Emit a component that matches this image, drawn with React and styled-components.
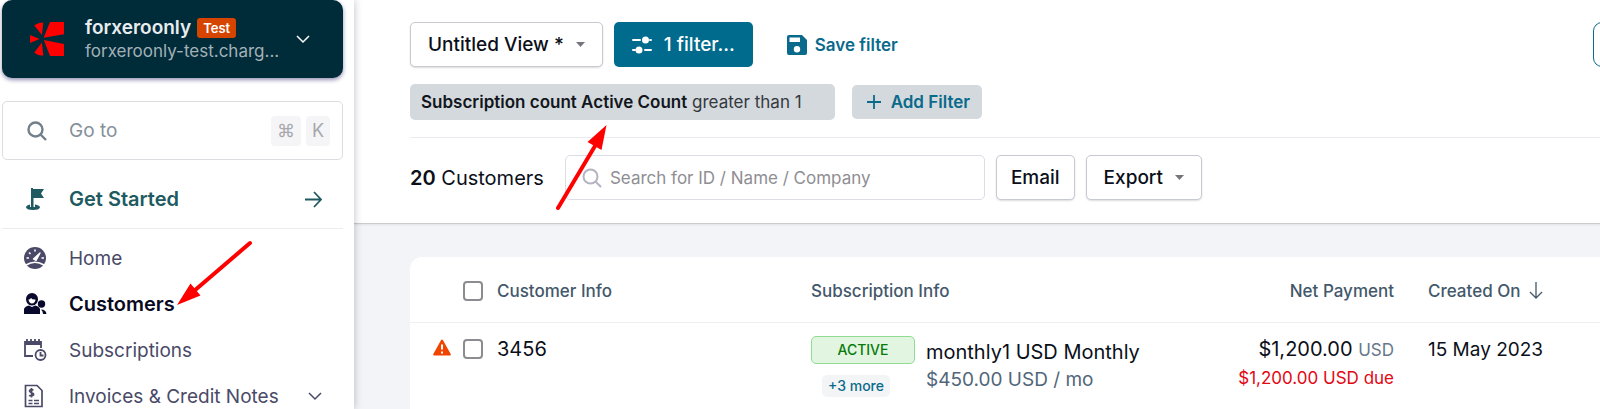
import styled, { createGlobalStyle, css } from 'styled-components';

const GlobalStyle = createGlobalStyle`
  * {
    box-sizing: border-box;
  }
  body {
    margin: 0;
    background: #fff;
    color: #0b0f19;
    font-family: Inter, 'Liberation Sans', sans-serif;
    font-size: 20px;
  }
  button, input {
    font-family: inherit;
  }
`;

const Page = styled.div`
  position: relative;
  display: flex;
  height: 100vh;
  overflow: hidden;
`;

const Sidebar = styled.aside`
  position: relative;
  flex: 0 0 354px;
  min-width: 0;
  padding: 0 11px 0 2px;
  background: #fff;
  box-shadow: 0 0 8px rgba(20, 24, 60, 0.28);
`;

const Account = styled.button`
  display: flex;
  align-items: center;
  width: 100%;
  height: 78px;
  padding: 0 33px 0 28px;
  border: none;
  border-radius: 10px;
  background: #002b39;
  box-shadow: 0 2px 4px rgba(20, 10, 90, 0.45);
  color: #fff;
  text-align: left;
`;

const AccountText = styled.span`
  flex: 1;
  margin-left: 21px;
`;

const AccountName = styled.span`
  display: flex;
  align-items: center;
  gap: 6px;
  font-size: 19px;
  font-weight: 600;
  line-height: 24px;
  color: #e9edef;
`;

const TestTag = styled.span`
  padding: 0 6px;
  border-radius: 3px;
  background: #d64500;
  font-size: 13px;
  line-height: 20px;
  color: #fff;
`;

const AccountDomain = styled.span`
  display: block;
  font-size: 17px;
  line-height: 22px;
  color: #a3b1b7;
`;

const GoTo = styled.label`
  display: flex;
  align-items: center;
  height: 59px;
  margin-top: 23px;
  padding: 0 12px 0 24px;
  border: 1px solid #dcdde0;
  border-radius: 5px;
  color: #72808c;
`;

const GoToInput = styled.input`
  flex: 1;
  min-width: 0;
  margin-left: 22px;
  padding: 0;
  border: none;
  outline: none;
  font-size: 19px;
  &::placeholder {
    color: #84909a;
  }
`;

const Key = styled.kbd`
  min-width: 24px;
  margin-left: 5px;
  padding: 0 6px;
  border-radius: 4px;
  background: #f5f5f7;
  font-family: inherit;
  font-size: 18px;
  line-height: 30px;
  text-align: center;
  color: #a8a8ac;
`;

const NavLink = styled.a`
  display: flex;
  align-items: center;
  height: ${(props) => (props.$lead ? '68px' : '46px')};
  padding: ${(props) => (props.$lead ? '10px' : '0')} 21px 0;
  font-size: ${(props) => (props.$strong ? '20px' : '19px')};
  font-weight: ${(props) => (props.$strong ? 600 : 400)};
  color: ${(props) => props.$color || '#4a4a68'};
  text-decoration: none;
  span {
    flex: 1;
    margin-left: 22px;
  }
`;

const NavList = styled.nav`
  padding-top: 6px;
  border-top: 1px solid #ebecee;
`;

const Main = styled.main`
  flex: 1;
  min-width: 0;
  overflow: hidden;
  background: #f3f4f7;
`;

const Header = styled.header`
  padding: 22px 0 23px 56px;
  border-bottom: 1px solid #c9cbcd;
  background: #fff;
  box-shadow: 0 1px 2px rgba(0, 0, 0, 0.08);
`;

const Toolbar = styled.div`
  display: flex;
  align-items: center;
  gap: 11px;
`;

const FilterRow = styled(Toolbar)`
  gap: 17px;
  padding: 17px 0;
  border-bottom: 1px solid #ebecf1;
`;

const ListBar = styled(Toolbar)`
  padding-top: 17px;
`;

const outlined = css`
  border: 1px solid #c8cad2;
  background: #fff;
  box-shadow: 0 1px 2px rgba(0, 0, 0, 0.14);
  color: #0b0f19;
`;

const Button = styled.button`
  display: flex;
  align-items: center;
  gap: 12px;
  height: 45px;
  padding: 0 ${(props) => props.$pad || 14}px;
  border: none;
  border-radius: 5px;
  font-size: 19px;
  font-weight: 500;
  white-space: nowrap;
  ${(props) => props.$primary && 'background: #006b8c; color: #fff;'}
  ${(props) => props.$outlined && outlined}
`;

const LinkButton = styled.button`
  display: flex;
  align-items: center;
  gap: 8px;
  margin-left: 23px;
  padding: 0;
  border: none;
  background: none;
  font-size: 17px;
  font-weight: 600;
  color: #0a6a8b;
`;

const MoreButton = styled(Button)`
  width: 48px;
  margin: 0 -41px 0 auto;
  border: 1px solid #0a6a8b;
  border-radius: 9px;
  background: #fff;
`;

const FilterChip = styled.button`
  height: 36px;
  padding: 0 33px 0 11px;
  border: none;
  border-radius: 5px;
  background: #d4d9dd;
  font-size: 17px;
  color: #33383d;
  white-space: nowrap;
  strong {
    font-weight: 600;
    color: #12161c;
  }
`;

const AddFilter = styled.button`
  display: flex;
  align-items: center;
  gap: 10px;
  height: 34px;
  padding: 0 12px 0 15px;
  border: none;
  border-radius: 5px;
  background: #d4d9dd;
  font-size: 17px;
  font-weight: 600;
  color: #0a6a8b;
`;

const Count = styled.h1`
  margin: 0 10px 0 0;
  font-size: 20px;
  font-weight: 400;
  white-space: nowrap;
  strong {
    font-weight: 600;
  }
`;

const Search = styled.label`
  display: flex;
  align-items: center;
  flex: 0 1 420px;
  height: 45px;
  padding: 0 16px;
  border: 1px solid #dcdde6;
  border-radius: 5px;
  color: #b4b4c2;
`;

const SearchInput = styled.input`
  flex: 1;
  min-width: 0;
  margin-left: 8px;
  padding: 0;
  border: none;
  outline: none;
  font-size: 17px;
  &::placeholder {
    color: #8e8e93;
  }
`;

const Table = styled.table`
  width: calc(100% - 56px);
  min-height: 200px;
  margin: 33px 0 0 56px;
  border-collapse: separate;
  border-spacing: 0;
  border-top-left-radius: 12px;
  background: #fff;
  table-layout: fixed;
`;

const Th = styled.th`
  width: ${(props) => props.$width || 'auto'};
  height: 66px;
  padding: 2px 0 0;
  border-bottom: 1px solid #eeeff1;
  font-size: 17px;
  font-weight: 500;
  text-align: ${(props) => props.$align || 'left'};
  color: #43586a;
`;

const Td = styled.td`
  height: 88px;
  padding: 12px 0 0;
  line-height: 28px;
  text-align: ${(props) => props.$align || 'left'};
  vertical-align: top;
`;

const AlertTd = styled(Td)`
  padding-right: 12px;
  text-align: right;
`;

const Checkbox = styled.input`
  display: block;
  width: 20px;
  height: 20px;
  margin: ${(props) => (props.$row ? '4px' : '0')} 0 0;
  appearance: none;
  border: 2px solid #8c8c90;
  border-radius: 4px;
  background: #fff;
`;

const Sort = styled.span`
  display: inline-flex;
  align-items: center;
  gap: 9px;
`;

const Subscription = styled.div`
  display: flex;
  gap: 11px;
`;

const Badges = styled.div`
  display: flex;
  flex: 0 0 104px;
  flex-direction: column;
  align-items: flex-start;
  gap: 11px;
  padding-top: 1px;
`;

const Status = styled.span`
  width: 100%;
  border: 1px solid #8fdc92;
  border-radius: 5px;
  background: #e1f5e0;
  font-size: 14px;
  font-weight: 500;
  line-height: 26px;
  text-align: center;
  color: #087a0c;
`;

const More = styled.a`
  margin-left: 11px;
  padding: 0 6px;
  border-radius: 5px;
  background: #f3f4f6;
  font-size: 14px;
  font-weight: 500;
  line-height: 22px;
  color: #0a6a8b;
  text-decoration: none;
`;

const Plan = styled.div`
  padding-top: 3px;
  white-space: nowrap;
`;

const Muted = styled.div`
  font-size: 19px;
  color: #51667a;
`;

const Currency = styled.span`
  font-size: 17px;
  color: #66788a;
`;

const Due = styled.div`
  font-size: 17px;
  color: #e30613;
`;

const Created = styled.time`
  font-size: 19px;
`;

const Arrows = styled.svg`
  position: absolute;
  top: 0;
  left: 0;
  pointer-events: none;
`;

const Logo = () => (
  <svg width="34" height="34" viewBox="0 0 34 34" fill="#ff0000" aria-hidden="true">
    <path d="M20 0H34V12.3L13.6 15.7ZM13.8 18L34 22V34H20ZM13.3 0.4L11.9 13L4.3 3.6Q8 0.4 13.3 0.4ZM0 13L9.5 17L0 21ZM4.3 30.4L11.9 20.5L13.3 33.6Q8 33.6 4.3 30.4Z" />
  </svg>
);

const SearchIcon = ({ size, weight }) => (
  <svg width={size} height={size} viewBox="0 0 20 20" fill="none" stroke="currentColor" strokeWidth={weight} aria-hidden="true">
    <circle cx="8.5" cy="8.5" r="7" />
    <path d="M13.5 13.5L19 19" />
  </svg>
);

const FlagIcon = () => (
  <svg width="24" height="24" viewBox="0 0 24 24" fill="#205a61" aria-hidden="true">
    <path d="M8 1H10V2H21L18 6.5L21 11H10.5V20H8Z" />
    <path d="M7 17.5Q3 18.5 3 20.5Q4 23 10 23T17 20.5Q17 18.5 12 17.5V20H7Z" />
  </svg>
);

const GaugeIcon = () => (
  <svg width="24" height="24" viewBox="0 0 24 24" aria-hidden="true">
    <circle cx="12" cy="12" r="11" fill="#4a4a68" />
    <path d="M3 19Q12 13.5 21 19" stroke="#fff" strokeWidth="1.6" fill="none" />
    <path d="M10.5 13L17 7L13 14.5Z" fill="#fff" stroke="#fff" strokeWidth="1.4" strokeLinejoin="round" />
    <path d="M3.5 12H6M18.5 12H21M6 6.5L7.5 8M12 3.5V5.5" stroke="#fff" strokeWidth="1.6" />
  </svg>
);

const PeopleIcon = () => (
  <svg width="24" height="24" viewBox="0 0 24 24" fill="#09092d" aria-hidden="true">
    <path d="M9 1A6 6 0 0 1 15 7C15 10 13 13.5 9 13.5S3 10 3 7A6 6 0 0 1 9 1ZM5.5 7.5C5.5 9.5 7 11.5 9 11.5S12.5 9.5 12.5 7.5Q9.5 8 8 6Q7 7.5 5.5 7.5Z" fillRule="evenodd" />
    <path d="M1 22V17Q2 14 6 13.5L9 15L12 13.5Q16 14 17 17V22Z" />
    <circle cx="18.5" cy="12" r="3.7" />
    <path d="M18 17.5Q23 17.5 23.5 22H20Q20 19 18 17.5Z" />
  </svg>
);

const CalendarIcon = () => (
  <svg width="24" height="24" viewBox="0 0 24 24" fill="none" stroke="#4a4a68" strokeWidth="1.8" aria-hidden="true">
    <path d="M10 18H2V4H18V10M2 6H18M4 1V6M8 1V6M12 1V6M16 1V6" />
    <circle cx="17.5" cy="17" r="5" />
    <path d="M17.5 14V17.5H20.5" />
  </svg>
);

const InvoiceIcon = () => (
  <svg width="24" height="24" viewBox="0 0 24 24" fill="none" stroke="#4a4a68" strokeWidth="1.7" aria-hidden="true">
    <path d="M2.5 1.5H14L19 6.5V22.5H2.5Z" />
    <path d="M10.5 6Q6.5 5 6.5 7Q7 8.5 8.5 8.5Q11 9.5 10.5 11Q8.5 12.5 6 11.5M8.5 4V13.5M5.5 16.5H9.5M5.5 19.5H9.5M11 16.5H16M11 19.5H16" />
  </svg>
);

const Chevron = () => (
  <svg width="14" height="9" viewBox="0 0 14 9" fill="none" stroke="currentColor" strokeWidth="1.5" aria-hidden="true">
    <path d="M1 1L7 7L13 1" />
  </svg>
);

const Caret = () => (
  <svg width="9" height="5" viewBox="0 0 9 5" fill="#75757c" aria-hidden="true">
    <path d="M0 0H9L4.5 5Z" />
  </svg>
);

const SlidersIcon = () => (
  <svg width="20" height="18" viewBox="0 0 20 18" fill="#fff" stroke="#fff" strokeWidth="2" strokeLinecap="round" aria-hidden="true">
    <path d="M1 4H8M18 4H19M1 14H3M13 14H19" />
    <circle cx="13.5" cy="4" r="2.5" />
    <circle cx="7" cy="14" r="2.5" />
  </svg>
);

const SaveIcon = () => (
  <svg width="20" height="20" viewBox="0 0 20 20" fill="#0a6a8b" fillRule="evenodd" aria-hidden="true">
    <path d="M2 0H15L20 5V18Q20 20 18 20H2Q0 20 0 18V2Q0 0 2 0ZM2.5 2.5V7H13V2.5ZM10 11A3.2 3.2 0 1 0 10 17.4A3.2 3.2 0 1 0 10 11Z" />
  </svg>
);

const WarningIcon = () => (
  <svg width="18" height="17" viewBox="0 0 18 17" aria-label="Warning">
    <path d="M9 1.5L16.8 15.5H1.2Z" fill="#f04400" stroke="#f04400" strokeWidth="2" strokeLinejoin="round" />
    <path d="M9 5.5V10.5M9 12.5V14.5" stroke="#fff" strokeWidth="2" />
  </svg>
);

function App() {
  return (
    <Page>
      <GlobalStyle />
      <Sidebar>
        <Account>
          <Logo />
          <AccountText>
            <AccountName>
              forxeroonly <TestTag>Test</TestTag>
            </AccountName>
            <AccountDomain>forxeroonly-test.charg...</AccountDomain>
          </AccountText>
          <Chevron />
        </Account>
        <GoTo>
          <SearchIcon size={20} weight={2.4} />
          <GoToInput aria-label="Go to" placeholder="Go to" />
          <Key>⌘</Key>
          <Key>K</Key>
        </GoTo>
        <NavLink href="#start" $lead $strong $color="#205a61">
          <FlagIcon />
          <span>Get Started</span>
          <svg width="17" height="17" viewBox="0 0 17 17" fill="none" stroke="currentColor" strokeWidth="1.8" aria-hidden="true">
            <path d="M0 8.5H16M9 1L16 8.5L9 16" />
          </svg>
        </NavLink>
        <NavList>
          <NavLink href="#home">
            <GaugeIcon />
            <span>Home</span>
          </NavLink>
          <NavLink href="#customers" $strong $color="#09091f">
            <PeopleIcon />
            <span>Customers</span>
          </NavLink>
          <NavLink href="#subscriptions">
            <CalendarIcon />
            <span>Subscriptions</span>
          </NavLink>
          <NavLink href="#invoices">
            <InvoiceIcon />
            <span>Invoices &amp; Credit Notes</span>
            <Chevron />
          </NavLink>
        </NavList>
      </Sidebar>
      <Main>
        <Header>
          <Toolbar>
            <Button $outlined $pad={17}>
              Untitled View * <Caret />
            </Button>
            <Button $primary $pad={18}>
              <SlidersIcon /> 1 filter...
            </Button>
            <LinkButton>
              <SaveIcon /> Save filter
            </LinkButton>
            <MoreButton aria-label="More" />
          </Toolbar>
          <FilterRow>
            <FilterChip>
              <strong>Subscription count Active Count</strong> greater than 1
            </FilterChip>
            <AddFilter>
              <svg width="14" height="14" viewBox="0 0 14 14" stroke="currentColor" strokeWidth="1.8" aria-hidden="true">
                <path d="M7 0V14M0 7H14" />
              </svg>
              Add Filter
            </AddFilter>
          </FilterRow>
          <ListBar>
            <Count>
              <strong>20</strong> Customers
            </Count>
            <Search>
              <SearchIcon size={20} weight={2} />
              <SearchInput aria-label="Search customers" placeholder="Search for ID / Name / Company" />
            </Search>
            <Button $outlined>Email</Button>
            <Button $outlined $pad={17}>
              Export <Caret />
            </Button>
          </ListBar>
        </Header>
        <Table>
          <thead>
            <tr>
              <Th $width="53px" aria-label="Alerts" />
              <Th $width="34px">
                <Checkbox type="checkbox" aria-label="Select all customers" />
              </Th>
              <Th $width="314px">Customer Info</Th>
              <Th>Subscription Info</Th>
              <Th $width="220px" $align="right">Net Payment</Th>
              <Th $width="34px" aria-hidden="true" />
              <Th $width="172px">
                <Sort>
                  Created On
                  <svg width="14" height="17" viewBox="0 0 14 17" fill="none" stroke="currentColor" strokeWidth="1.3" aria-hidden="true">
                    <path d="M7 0V16M1 10L7 16L13 10" />
                  </svg>
                </Sort>
              </Th>
            </tr>
          </thead>
          <tbody>
            <tr>
              <AlertTd>
                <WarningIcon />
              </AlertTd>
              <Td>
                <Checkbox $row type="checkbox" aria-label="Select 3456" />
              </Td>
              <Td>3456</Td>
              <Td>
                <Subscription>
                  <Badges>
                    <Status>ACTIVE</Status>
                    <More href="#more">+3 more</More>
                  </Badges>
                  <Plan>
                    monthly1 USD Monthly
                    <Muted>$450.00 USD / mo</Muted>
                  </Plan>
                </Subscription>
              </Td>
              <Td $align="right">
                $1,200.00 <Currency>USD</Currency>
                <Due>$1,200.00 USD due</Due>
              </Td>
              <Td />
              <Td>
                <Created>15 May 2023</Created>
              </Td>
            </tr>
          </tbody>
        </Table>
      </Main>
      <Arrows width="640" height="320" viewBox="0 0 640 320" stroke="#ff0000" fill="#ff0000" aria-hidden="true">
        <path d="M250 243L194 291M558 208L595 146" strokeWidth="4" strokeLinecap="round" />
        <path d="M177 305L190.5 283.5L200.5 295.5ZM606.5 125L587.5 142L601.5 150Z" stroke="none" />
      </Arrows>
    </Page>
  );
}

export default App;
